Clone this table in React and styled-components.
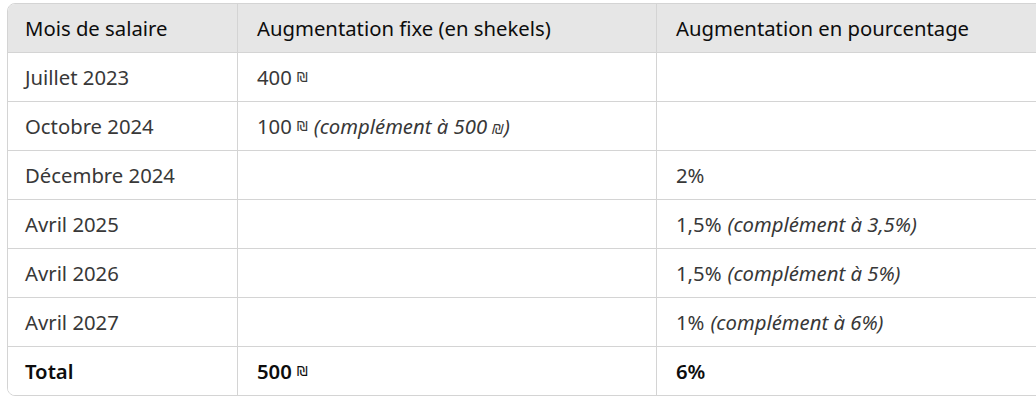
import React from "react";
import styled, { createGlobalStyle } from "styled-components";

const Global = createGlobalStyle`
  html, body { margin: 0; padding: 0; background: #fff; overflow: hidden; }
  body { font-family: "Noto Sans", "Open Sans", sans-serif; }
`;

const Page = styled.div`
  padding: 3px 0 0 7px;
`;

const Table = styled.div`
  width: 1040px;
  border: 1px solid #d4d4d4;
  border-radius: 8px;
  overflow: hidden;
  display: grid;
  grid-template-columns: 229px 419px 1fr;
`;

const Cell = styled.div`
  height: 48px;
  display: flex;
  align-items: center;
  padding: 0 18px;
  font-size: 20.3px;
  color: ${(p) => (p.$head || p.$total ? "#0d0d0d" : "#383838")};
  font-weight: ${(p) => (p.$total ? 600 : 400)};
  background: ${(p) => (p.$head ? "#e6e6e6" : "#fff")};
  border-bottom: ${(p) => (p.$last ? "none" : "1px solid #d4d4d4")};
  border-left: ${(p) => (p.$first ? "none" : "1px solid #d4d4d4")};
  white-space: nowrap;
  padding-left: ${(p) => (p.$first ? "17px" : "19px")};
`;

const Note = styled.em`
  font-style: italic;
  margin-left: 6px;
`;

const Shekel = styled.span`
  font-size: 14px;
  font-weight: 400;
  margin-left: ${(p) => (p.$tight ? "0" : "5px")};
  font-family: "DejaVu Sans", sans-serif;
`;

const rows = [
  ["Juillet 2023", <>400<Shekel>₪</Shekel></>, ""],
  ["Octobre 2024", <>100<Shekel>₪</Shekel><Note>(complément à 500 <Shekel $tight>₪</Shekel>)</Note></>, ""],
  ["Décembre 2024", "", "2%"],
  ["Avril 2025", "", <>1,5%<Note>(complément à 3,5%)</Note></>],
  ["Avril 2026", "", <>1,5%<Note>(complément à 5%)</Note></>],
  ["Avril 2027", "", <>1%<Note>(complément à 6%)</Note></>],
];

export default function App() {
  return (
    <Page>
      <Global />
      <Table>
        <Cell $head $first>Mois de salaire</Cell>
        <Cell $head>Augmentation fixe (en shekels)</Cell>
        <Cell $head>Augmentation en pourcentage</Cell>
        {rows.map((r, i) => (
          <React.Fragment key={i}>
            <Cell $first>{r[0]}</Cell>
            <Cell>{r[1]}</Cell>
            <Cell>{r[2]}</Cell>
          </React.Fragment>
        ))}
        <Cell $first $total $last>Total</Cell>
        <Cell $total $last>500<Shekel>₪</Shekel></Cell>
        <Cell $total $last>6%</Cell>
      </Table>
    </Page>
  );
}
